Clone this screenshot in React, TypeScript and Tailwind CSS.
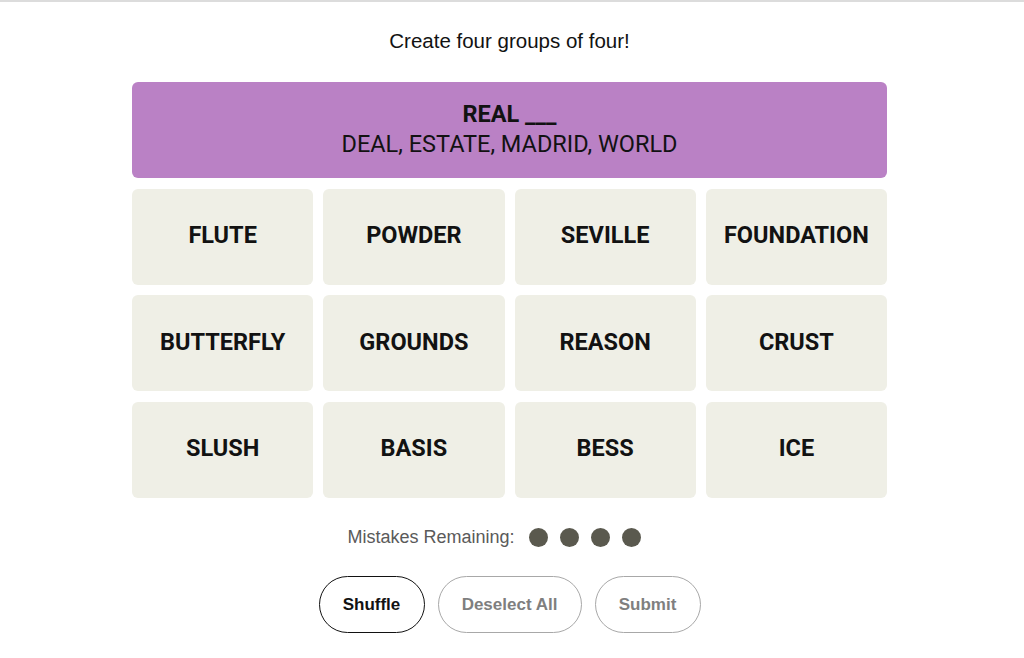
const tiles = [
  'FLUTE',
  'POWDER',
  'SEVILLE',
  'FOUNDATION',
  'BUTTERFLY',
  'GROUNDS',
  'REASON',
  'CRUST',
  'SLUSH',
  'BASIS',
  'BESS',
  'ICE'
];

export default function App() {
  return (
    <div className="min-h-[658px] w-full border-t-2 border-[#dcdcdc] bg-white font-['Roboto',sans-serif] text-[#121212]">
      <div className="flex w-[1019px] flex-col items-center">
        <div className="mt-[26px] font-['Liberation_Sans',sans-serif] text-[20.5px] leading-[26px]">
          Create four groups of four!
        </div>

        <div className="mt-[28px] flex w-[755px] flex-col gap-y-[10.6px]">
          <div className="flex h-[96px] flex-col items-center justify-center rounded-md bg-[#ba81c5] pb-[3px]">
            <div className="text-[23.5px] font-bold leading-[30px]">REAL ___</div>
            <div className="text-[23.5px] leading-[30px]">DEAL, ESTATE, MADRID, WORLD</div>
          </div>
          <div className="grid grid-cols-4 gap-x-[10px] gap-y-[10.6px]">
            {tiles.map((word) => (
              <div
                key={word}
                className="flex h-[96px] items-center justify-center rounded-md bg-[#efefe6] pb-[2px] text-[23.5px] font-bold"
              >
                {word}
              </div>
            ))}
          </div>
        </div>

        <div className="mt-[26px] flex items-center pr-[31px] font-['Liberation_Sans',sans-serif] text-[18px] text-[#5a5a5a]">
          <span>Mistakes Remaining:</span>
          <div className="ml-[14px] flex gap-[12px]">
            {[0, 1, 2, 3].map((i) => (
              <span key={i} className="h-[19px] w-[19px] rounded-full bg-[#5a594e]" />
            ))}
          </div>
        </div>

        <div className="mt-[25px] flex gap-[13px] font-['Liberation_Sans',sans-serif] text-[17px] font-bold">
          <button className="h-[57px] w-[106px] rounded-full border border-[#121212] text-[#121212]">Shuffle</button>
          <button className="h-[57px] w-[144px] rounded-full border border-[#a8a8a8] text-[#7f7f7f]">Deselect All</button>
          <button className="h-[57px] w-[106px] rounded-full border border-[#a8a8a8] text-[#7f7f7f]">Submit</button>
        </div>
      </div>
    </div>
  );
}
